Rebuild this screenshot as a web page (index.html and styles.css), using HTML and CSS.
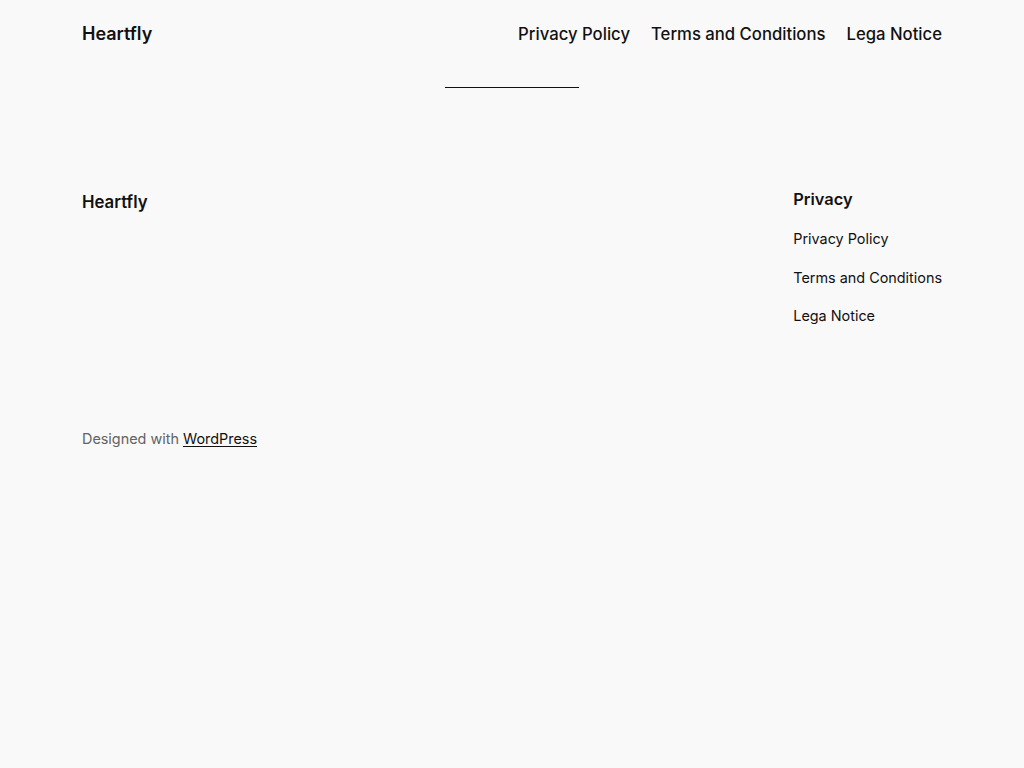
FILE: index.html
```html
<!DOCTYPE html>
<html lang="en">
<head>
    <meta charset="UTF-8">
    <meta name="viewport" content="width=device-width, initial-scale=1.0">
    <link rel="stylesheet" href="styles.css">
</head>
<body>
    <header class="site-header">
        <a class="site-title" href="#">Heartfly</a>
        <nav class="main-nav">
            <a href="#">Privacy Policy</a>
            <a href="#">Terms and Conditions</a>
            <a href="#">Lega Notice</a>
        </nav>
    </header>

    <main class="content">
        <hr class="separator">
    </main>

    <footer class="site-footer">
        <div class="footer-top">
            <a class="footer-title" href="#">Heartfly</a>
            <div class="footer-col">
                <h2>Privacy</h2>
                <ul class="footer-links">
                    <li><a href="#">Privacy Policy</a></li>
                    <li><a href="#">Terms and Conditions</a></li>
                    <li><a href="#">Lega Notice</a></li>
                </ul>
            </div>
        </div>
        <p class="credit">Designed with <a href="#">WordPress</a></p>
    </footer>
</body>
</html>
```

FILE: styles.css
```css
body {
    font-family: "Inter", "Liberation Sans", sans-serif;
    background-color: #f9f9f9;
    color: #111111;
    margin: 0;
    padding: 0 82px;
}

a {
    color: #111111;
    text-decoration: none;
}

.site-header {
    display: flex;
    justify-content: space-between;
    align-items: center;
    height: 68px;
}

.site-title {
    font-size: 18px;
    font-weight: 600;
    margin-top: -2px;
}

.main-nav {
    display: flex;
    gap: 21px;
}

.main-nav a {
    font-size: 16.7px;
    font-weight: 500;
}

.content {
    padding-top: 19px;
}

.separator {
    width: 134px;
    margin: 0 auto;
    border: none;
    border-top: 1px solid #111111;
}

.site-footer {
    padding-top: 100px;
}

.footer-top {
    display: flex;
    justify-content: space-between;
    align-items: flex-start;
}

.footer-title {
    font-size: 16.8px;
    font-weight: 600;
    margin-top: 4px;
}

.footer-col {
    padding-top: 1px;
}

.footer-col h2 {
    font-size: 16.4px;
    font-weight: 600;
    margin: 0 0 19px;
}

.footer-links {
    list-style: none;
    margin: 0;
    padding: 0;
    display: flex;
    flex-direction: column;
    gap: 18.5px;
}

.footer-links a {
    font-size: 14.4px;
}

.credit {
    margin: 105px 0 0;
    font-size: 14.4px;
    color: #636363;
}

.credit a {
    text-decoration: underline;
    text-underline-offset: 2px;
}
```
